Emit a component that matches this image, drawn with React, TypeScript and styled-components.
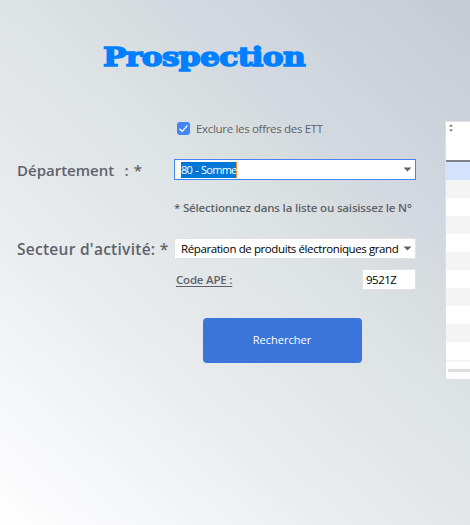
import React from "react";
import styled, { createGlobalStyle } from "styled-components";

const Global = createGlobalStyle`
  * { box-sizing: border-box; }
  body { margin: 0; overflow: hidden; }
`;

const Page = styled.main`
  display: flex;
  width: 470px;
  height: 525px;
  overflow: hidden;
  font-family: "Open Sans", sans-serif;
  color: #5f6368;
  background: linear-gradient(42deg, #fefefe 0%, #f5f6f8 15%, #ebeef1 30%, #e4e8eb 42%, #dee3e5 55%, #d7dcde 66%, #d5dae1 69%, #cfd5dd 80%, #c4cbd2 100%);
`;

const Form = styled.form`
  flex: 0 0 445px;
  padding: 36px 29px 0 17px;
`;

const Title = styled.h1`
  margin: 0 0 42px 86px;
  width: 180px;
  height: 43px;
  font: 700 26px/43px "DejaVu Serif", serif;
  letter-spacing: -0.5px;
  white-space: nowrap;
  color: #0080ff;
  -webkit-text-stroke: 1.5px #0080ff;
  transform: scaleX(1.2);
  transform-origin: left;
`;

const Row = styled.div<{ $h: number; $gap: number }>`
  display: grid;
  grid-template-columns: 157px 242px;
  align-items: center;
  height: ${(p) => p.$h}px;
  margin-bottom: ${(p) => p.$gap}px;
`;

const Cell = styled.div`
  grid-column: 2;
  display: flex;
  align-items: center;
  justify-content: space-between;
`;

const Text = styled.span<{ $size?: number; $space?: number; $weight?: number; $word?: number }>`
  font-size: ${(p) => p.$size ?? 11.5}px;
  line-height: 16px;
  font-weight: ${(p) => p.$weight ?? 400};
  letter-spacing: ${(p) => p.$space ?? 0}px;
  word-spacing: ${(p) => p.$word ?? 0}px;
  white-space: pre;
`;

const Check = styled.label`
  grid-column: 2;
  display: flex;
  align-items: center;
  gap: 6px;
  height: 13px;
  padding-left: 3px;
`;

const Box = styled.span`
  display: flex;
  width: 13px;
  height: 13px;
  border-radius: 3px;
  background: #4285f4;
`;

const Select = styled.div<{ $focused?: boolean }>`
  display: flex;
  align-items: center;
  justify-content: space-between;
  height: 21px;
  padding: 0 3px 0 6px;
  border: 1px solid ${(p) => (p.$focused ? "#4285f4" : "#e0e2e4")};
  background: #fff;
  color: #000;
`;

const Selection = styled.span`
  display: flex;
  align-items: center;
  width: 56px;
  height: 16px;
  border-right: 1px solid #ff8728;
  background: #0078d7;
  color: #fff;
`;

const Underlined = styled.span`
  margin: -3px 0 0 2px;
  text-decoration: underline;
  text-underline-offset: 2px;
`;

const Code = styled.div`
  display: flex;
  align-items: center;
  width: 54px;
  height: 21px;
  padding-left: 3px;
  border: 1px solid #e0e2e4;
  background: #fff;
  color: #000;
`;

const Search = styled.button`
  display: flex;
  align-items: center;
  justify-content: center;
  width: 159px;
  height: 45px;
  margin: 28px 0 0 186px;
  padding: 0 1px 1px 0;
  border: 0;
  border-radius: 4px;
  background: #3b75d9;
  color: #fff;
  font-family: inherit;
`;

const Table = styled.section`
  flex: 0 0 60px;
  height: 259px;
  margin-top: 121px;
  border: 1px solid #dddfe1;
  border-right: 0;
  background: #fff;
`;

const Head = styled.div`
  display: flex;
  align-items: flex-start;
  height: 40px;
  padding: 2px 0 0 3px;
  border-bottom: 2px solid #7f8388;
`;

const Line = styled.div<{ $fill: string; $h?: number }>`
  height: ${(p) => p.$h ?? 18}px;
  background: ${(p) => p.$fill};
`;

const Scroll = styled.div`
  height: 3px;
  margin: 7px 0 0 2px;
  background: #dedede;
`;

const Arrow = () => (
  <svg width="9" height="5" viewBox="0 0 9 5"><path d="M.5.5h8l-4 4z" fill="#5f6368" /></svg>
);

const fills = ["#d3e3fd", ...Array.from({ length: 10 }, (_, i) => (i % 2 ? "#ffffff" : "#f4f4f4"))];

export default function App() {
  return (
    <Page>
      <Global />
      <Form>
        <Title>Prospection</Title>
        <Row $h={15} $gap={23}>
          <Check>
            <Box>
              <svg width="13" height="13" viewBox="0 0 13 13" fill="none" stroke="#fff" strokeWidth="1.3"><path d="m2.5 6.8 2.6 2.6 5.4-5.9" /></svg>
            </Box>
            <Text $space={-0.32}>Exclure les offres des ETT</Text>
          </Check>
        </Row>
        <Row $h={21} $gap={18}>
          <Text $size={15} $weight={600} $word={1.3}>Département  : *</Text>
          <Select $focused>
            <Selection><Text $size={11} $space={-0.75} $word={1}>80 - Somme</Text></Selection>
            <Arrow />
          </Select>
        </Row>
        <Row $h={20} $gap={20}>
          <Cell><Text $weight={600} $space={-0.17}>* Sélectionnez dans la liste ou saisissez le N°</Text></Cell>
        </Row>
        <Row $h={21} $gap={10}>
          <Text $size={15.5} $weight={600} $space={0.27}>Secteur d'activité: *</Text>
          <Select>
            <Text $space={-0.4}>Réparation de produits électroniques grand</Text>
            <Arrow />
          </Select>
        </Row>
        <Row $h={21} $gap={0}>
          <Cell>
            <Underlined><Text $weight={600} $space={-0.2}>Code APE :</Text></Underlined>
            <Code><Text $space={-0.5}>9521Z</Text></Code>
          </Cell>
        </Row>
        <Search type="button"><Text $size={11}>Rechercher</Text></Search>
      </Form>
      <Table>
        <Head>
          <svg width="5" height="8" viewBox="0 0 5 8" fill="#5f6368"><path d="M0 2.5h4L2 .5zM0 5.5h4l-2 2z" /></svg>
        </Head>
        {fills.map((fill, i) => <Line key={i} $fill={fill} />)}
        <Line $fill="#f4f4f4" $h={2} />
        <Scroll />
      </Table>
    </Page>
  );
}
